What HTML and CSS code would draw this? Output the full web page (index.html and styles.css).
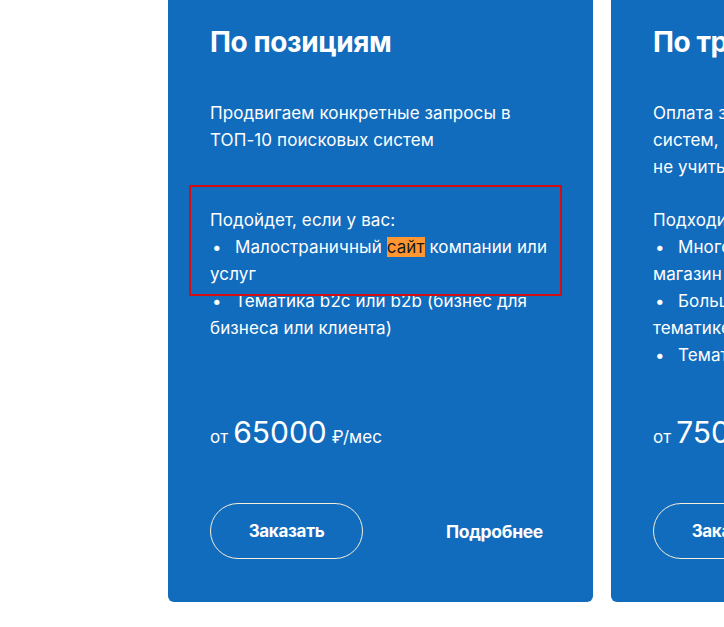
FILE: index.html
```html
<!DOCTYPE html>
<html lang="ru">
  <head>
    <meta charset="UTF-8" />
    <meta name="viewport" content="width=device-width, initial-scale=1.0" />
    <title>Тарифы</title>
    <link rel="stylesheet" href="styles.css">
  </head>
  <body>
    <div class="tariffs">
      <div class="tariff-card">
        <h2 class="tariff-title">По позициям</h2>
        <p class="tariff-desc">Продвигаем конкретные запросы в ТОП-10 поисковых систем</p>
        <div class="tariff-fit">
          <p>Подойдет, если у вас:</p>
          <p><span class="dot">•</span>Малостраничный <mark class="found">сайт</mark> компании или услуг</p>
          <p><span class="dot">•</span>Тематика b2c или b2b (бизнес для бизнеса или клиента)</p>
          <div class="note-frame"></div>
        </div>
        <div class="tariff-price">от <b>65000</b> ₽/мес</div>
        <div class="tariff-actions">
          <button class="btn-order">Заказать</button>
          <a class="btn-more" href="#">Подробнее</a>
        </div>
      </div>
      <div class="tariff-card">
        <h2 class="tariff-title">По трафику</h2>
        <p class="tariff-desc">Оплата за весь трафик из поисковых систем, а позиции запросов при этом не учитываются</p>
        <div class="tariff-fit">
          <p>Подходит, если у вас:</p>
          <p><span class="dot">•</span>Многостраничный портал или магазин</p>
          <p><span class="dot">•</span>Большое количество запросов в тематике</p>
          <p><span class="dot">•</span>Тематика с сезонным спросом</p>
        </div>
        <div class="tariff-price">от <b>75000</b> ₽/мес</div>
        <div class="tariff-actions">
          <button class="btn-order">Заказать</button>
          <a class="btn-more" href="#">Подробнее</a>
        </div>
      </div>
    </div>
  </body>
</html>
```

FILE: styles.css
```css
body {
  margin: 0;
  background: #fff;
  font-family: Inter, "Noto Sans", sans-serif;
  overflow: hidden;
}
/* page is scrolled a bit, cards start above the top */
.tariffs {
  display: flex;
  gap: 18px;
  margin-top: -30px;
  padding-left: 168px;
}
.tariff-card {
  flex: 0 0 425px;
  box-sizing: border-box;
  height: 632px;
  padding: 52px 42px 0 42px;
  background-color: #116cbd;
  color: #fff;
  border-radius: 6px;
  display: flex;
  flex-direction: column;
}
.tariff-title {
  margin: 0;
  font-size: 28px;
  line-height: 40px;
  font-weight: 700;
  letter-spacing: -0.4px;
}
.tariff-desc {
  margin: 38px 0 0 0;
  min-height: 81px;
  font-size: 17px;
  line-height: 27px;
  letter-spacing: 0.1px;
}
/* who this fits */
.tariff-fit {
  position: relative;
  margin-top: 26px;
  font-size: 17px;
  line-height: 27px;
  letter-spacing: 0.1px;
  height: 162px;
}
.tariff-fit p {
  margin: 0;
}
.dot {
  display: inline-block;
  width: 25px;
  padding-left: 2px;
  box-sizing: border-box;
}
.found {
  background-color: #ff9632;
  color: #1a1a1a;
}
.note-frame {
  position: absolute;
  left: -21px;
  top: -22px;
  width: 373px;
  height: 111px;
  border: 2px solid #d40d12;
  box-sizing: border-box;
}
.tariff-price {
  margin-top: 45px;
  font-size: 17px;
  display: flex;
  align-items: baseline;
  gap: 5px;
}
.tariff-price b {
  font-weight: 400;
  font-size: 30px;
}
.tariff-actions {
  margin-top: 53px;
  display: flex;
  align-items: center;
}
.btn-order {
  width: 153px;
  height: 56px;
  border: 1px solid #f4efd8;
  border-radius: 28px;
  background: transparent;
  color: #fff;
  font-family: inherit;
  font-size: 17px;
  font-weight: 700;
  letter-spacing: -0.3px;
  cursor: pointer;
}
.btn-more {
  margin-left: 83px;
  color: #fff;
  font-size: 17.5px;
  font-weight: 700;
  letter-spacing: -0.3px;
  text-decoration: none;
}
```
